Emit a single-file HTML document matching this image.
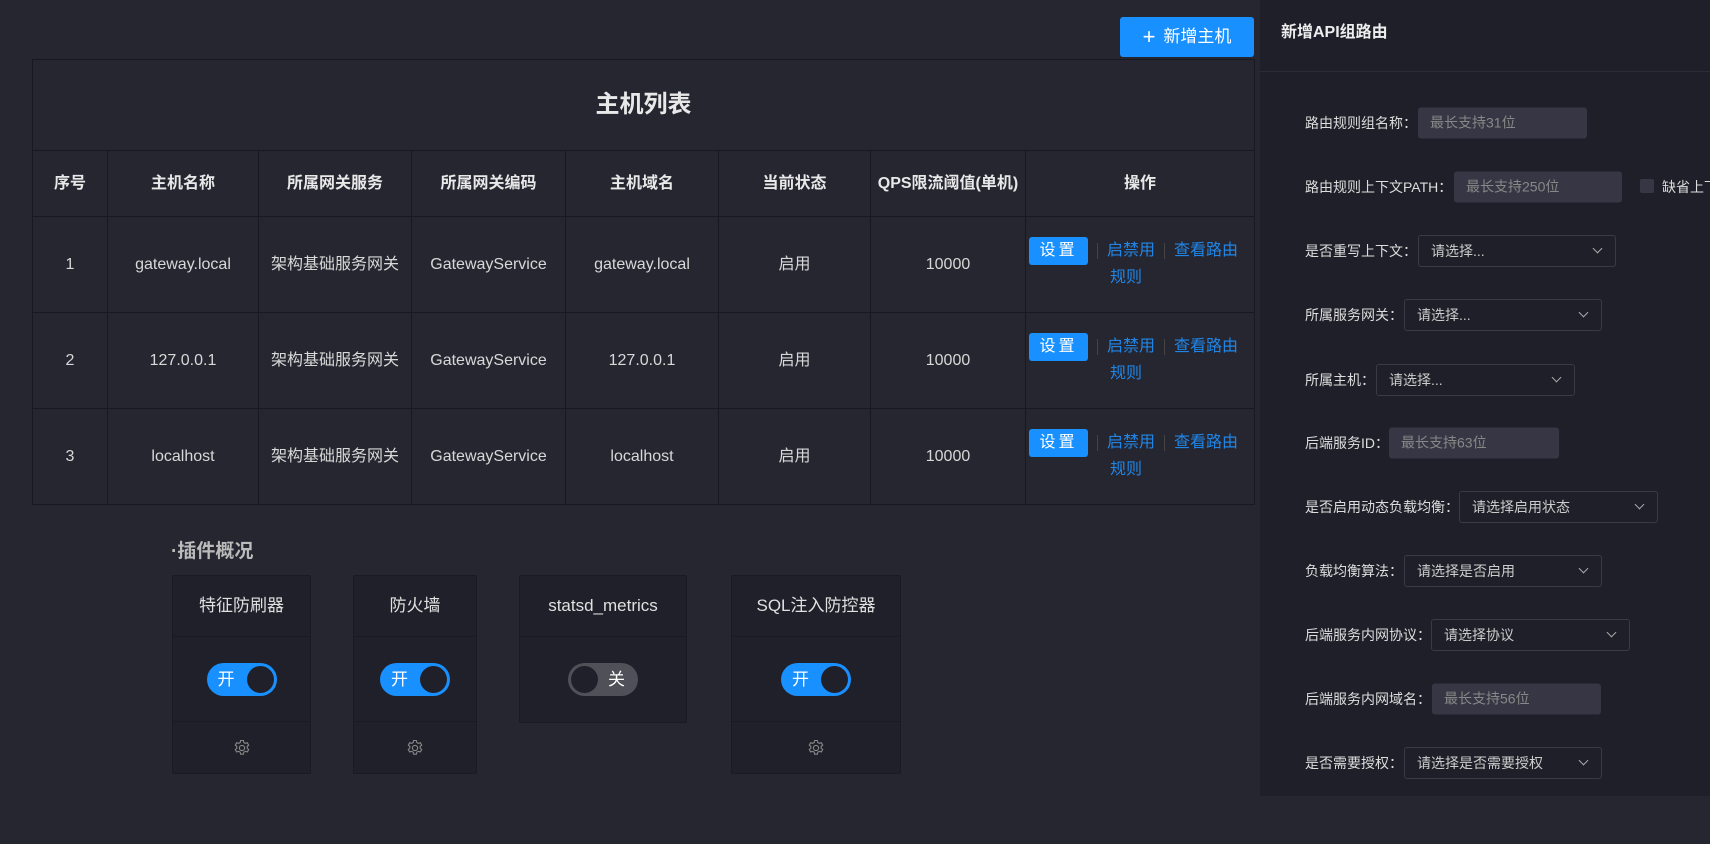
<!DOCTYPE html>
<html><head><meta charset="utf-8"><style>
*{box-sizing:border-box;margin:0;padding:0}
body{width:1710px;height:844px;background:#262631;font-family:"Liberation Sans","Noto Sans CJK SC",sans-serif;color:#ddd;position:relative;overflow:hidden}
.abs{position:absolute}
.btn{left:1120px;top:17px;width:134px;height:40px;background:#1890ff;border-radius:3px;color:#fff;font-size:17px;display:flex;align-items:center;justify-content:center;gap:8px;line-height:20px}
table{position:absolute;left:32px;top:59px;width:1222px;border-collapse:collapse;table-layout:fixed}
td,th{border:1px solid #18181f;text-align:center;font-size:16px;color:#d8d8d8;background:#262631;line-height:22px;vertical-align:middle}
td span,th span{vertical-align:middle}
th{font-weight:bold;color:#e8e8e8}
.title{height:91px;font-size:24px;font-weight:bold}
.hd th{height:66px}
.row td{height:96px}
.op{text-align:left;padding-left:3px;line-height:26px;position:relative}
.set{display:inline-block;background:#1890ff;color:#fff;border-radius:3px;width:59px;height:28px;line-height:28px;text-align:center;letter-spacing:3px;font-size:16px}
.lk{color:#1f86e8}
.sep{display:inline-block;width:1px;height:16px;background:#444;margin:0 9px;vertical-align:middle}
.sec{left:171px;top:540px;font-size:19px;font-weight:bold;color:#bbb;line-height:24px}
.card{background:#20202a;border:1px solid #1a1a22;border-radius:2px}
.ch{height:61px;display:flex;align-items:center;justify-content:center;font-size:17px;color:#e0e0e0;border-bottom:1px solid #1a1a22;line-height:20px}
.ct{height:85px;display:flex;align-items:center;justify-content:center;border-bottom:1px solid #1a1a22}
.cg{height:51px;display:flex;align-items:center;justify-content:center}
.tg{width:70px;height:33px;border-radius:17px;background:#1890ff;position:relative;color:#fff;font-size:17px}
.tg .k{position:absolute;right:3px;top:3px;width:27px;height:27px;border-radius:50%;background:#20202a}
.tg span{position:absolute;left:11px;top:0;line-height:33px}
.tg.off{background:#505058}
.tg.off .k{left:3px;right:auto}
.tg.off span{left:40px}
.panel{left:1260px;top:0;width:450px;height:796px;background:#1f1f29}
.ph{height:72px;border-bottom:1px solid #2c2c36;padding:23px 0 0 21px;font-size:16px;font-weight:bold;color:#eee;line-height:20px}
.lbl{position:absolute;left:1305px;font-size:14px;color:#ddd;transform:translateY(-50%);line-height:18px}
.inp{position:absolute;height:31px;transform:translateY(-50%);background:#363644;border-radius:3px;font-size:14px;color:#888;padding:0 12px;line-height:31px}
.sel{position:absolute;height:32px;transform:translateY(-50%);border:1px solid #3a3a46;border-radius:3px;font-size:14px;color:#ccc;padding:0 12px;line-height:30px}
.sel:after{content:"";position:absolute;right:14px;top:9px;width:6px;height:6px;border-right:1px solid #aaa;border-bottom:1px solid #aaa;transform:rotate(45deg)}
</style></head><body>
<div class="abs btn"><span style="font-size:22px;font-weight:300">+</span>新增主机</div>
<table>
<colgroup><col style="width:75px"><col style="width:151px"><col style="width:153px"><col style="width:154px"><col style="width:153px"><col style="width:152px"><col style="width:155px"><col style="width:229px"></colgroup>
<tr><th colspan="8" class="title">主机列表</th></tr>
<tr class="hd"><th>序号</th><th>主机名称</th><th>所属网关服务</th><th>所属网关编码</th><th>主机域名</th><th>当前状态</th><th>QPS限流阈值(单机)</th><th>操作</th></tr>
<tr class="row"><td>1</td><td>gateway.local</td><td>架构基础服务网关</td><td>GatewayService</td><td>gateway.local</td><td>启用</td><td>10000</td><td class="op"><span class="set">设置</span><span class="sep"></span><span class="lk">启禁用</span><span class="sep"></span><span class="lk">查看路由</span><br><span class="lk" style="margin-left:81px">规则</span></td></tr>
<tr class="row"><td>2</td><td>127.0.0.1</td><td>架构基础服务网关</td><td>GatewayService</td><td>127.0.0.1</td><td>启用</td><td>10000</td><td class="op"><span class="set">设置</span><span class="sep"></span><span class="lk">启禁用</span><span class="sep"></span><span class="lk">查看路由</span><br><span class="lk" style="margin-left:81px">规则</span></td></tr>
<tr class="row"><td>3</td><td>localhost</td><td>架构基础服务网关</td><td>GatewayService</td><td>localhost</td><td>启用</td><td>10000</td><td class="op"><span class="set">设置</span><span class="sep"></span><span class="lk">启禁用</span><span class="sep"></span><span class="lk">查看路由</span><br><span class="lk" style="margin-left:81px">规则</span></td></tr>
</table>
<div class="abs sec">·插件概况</div>
<svg width="0" height="0" style="position:absolute"><defs><g id="gear"><circle cx="9" cy="9" r="2.6" fill="none" stroke="#888" stroke-width="1.1"/><path d="M7.6 1.5h2.8l.4 2 1.6.9 1.9-.7 1.4 2.4-1.5 1.3v1.9l1.5 1.3-1.4 2.4-1.9-.7-1.6.9-.4 2H7.6l-.4-2-1.6-.9-1.9.7-1.4-2.4 1.5-1.3V7.4L2.3 6.1l1.4-2.4 1.9.7 1.6-.9z" fill="none" stroke="#888" stroke-width="1.1"/></g></defs></svg>
<div class="abs card" style="left:172px;top:575px;width:139px;height:199px"><div class="ch">特征防刷器</div><div class="ct"><div class="tg"><span>开</span><div class="k"></div></div></div><div class="cg"><svg width="18" height="18"><use href="#gear"/></svg></div></div>
<div class="abs card" style="left:353px;top:575px;width:124px;height:199px"><div class="ch">防火墙</div><div class="ct"><div class="tg"><span>开</span><div class="k"></div></div></div><div class="cg"><svg width="18" height="18"><use href="#gear"/></svg></div></div>
<div class="abs card" style="left:519px;top:575px;width:168px;height:148px"><div class="ch">statsd_metrics</div><div class="ct" style="border:none"><div class="tg off"><span>关</span><div class="k"></div></div></div></div>
<div class="abs card" style="left:731px;top:575px;width:170px;height:199px"><div class="ch">SQL注入防控器</div><div class="ct"><div class="tg"><span>开</span><div class="k"></div></div></div><div class="cg"><svg width="18" height="18"><use href="#gear"/></svg></div></div>
<div class="abs panel"><div class="ph">新增API组路由</div></div>
<div class="lbl" style="top:123px">路由规则组名称：</div><div class="inp" style="top:123px;left:1418px;width:169px">最长支持31位</div>
<div class="lbl" style="top:187px">路由规则上下文PATH：</div><div class="inp" style="top:187px;left:1454px;width:168px">最长支持250位</div>
<div class="abs" style="left:1640px;top:179px;width:14px;height:14px;background:#363644;border-radius:2px"></div><div class="lbl" style="left:1662px;top:187px;white-space:nowrap">缺省上下文</div>
<div class="lbl" style="top:251px">是否重写上下文：</div><div class="sel" style="top:251px;left:1418px;width:198px">请选择...</div>
<div class="lbl" style="top:315px">所属服务网关：</div><div class="sel" style="top:315px;left:1404px;width:198px">请选择...</div>
<div class="lbl" style="top:380px">所属主机：</div><div class="sel" style="top:380px;left:1376px;width:199px">请选择...</div>
<div class="lbl" style="top:443px">后端服务ID：</div><div class="inp" style="top:443px;left:1389px;width:170px">最长支持63位</div>
<div class="lbl" style="top:507px">是否启用动态负载均衡：</div><div class="sel" style="top:507px;left:1459px;width:199px">请选择启用状态</div>
<div class="lbl" style="top:571px">负载均衡算法：</div><div class="sel" style="top:571px;left:1404px;width:198px">请选择是否启用</div>
<div class="lbl" style="top:635px">后端服务内网协议：</div><div class="sel" style="top:635px;left:1431px;width:199px">请选择协议</div>
<div class="lbl" style="top:699px">后端服务内网域名：</div><div class="inp" style="top:699px;left:1432px;width:169px">最长支持56位</div>
<div class="lbl" style="top:763px">是否需要授权：</div><div class="sel" style="top:763px;left:1404px;width:198px">请选择是否需要授权</div>
</body></html>
